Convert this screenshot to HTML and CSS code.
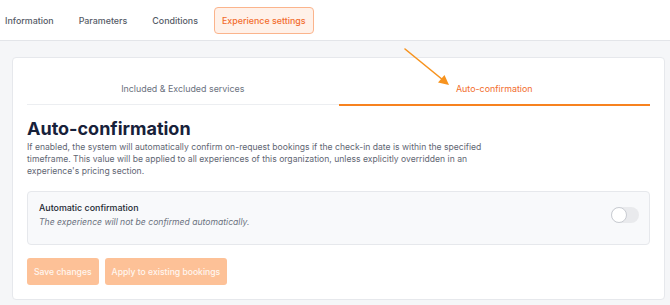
FILE: index.html
```html
<!DOCTYPE html>
<html lang="en">
<head>
    <meta charset="UTF-8">
    <meta name="viewport" content="width=device-width, initial-scale=1.0">
    <title>Experience settings</title>
    <link rel="stylesheet" href="styles.css">
</head>
<body>
    <nav class="topnav">
        <a class="nav-link">Information</a>
        <a class="nav-link">Parameters</a>
        <a class="nav-link">Conditions</a>
        <a class="nav-link active">Experience settings</a>
    </nav>

    <main class="page">
        <div class="card">
            <div class="tabs">
                <div class="tab">Included &amp; Excluded services</div>
                <div class="tab active">Auto-confirmation</div>
            </div>

            <h1>Auto-confirmation</h1>
            <p class="description">If enabled, the system will automatically confirm on-request bookings if the check-in date is within the specified timeframe. This value will be applied to all experiences of this organization, unless explicitly overridden in an experience's pricing section.</p>

            <div class="setting">
                <div class="setting-text">
                    <div class="setting-title">Automatic confirmation</div>
                    <div class="setting-hint">The experience will not be confirmed automatically.</div>
                </div>
                <div class="toggle"><span class="knob"></span></div>
            </div>

            <div class="actions">
                <button type="button" disabled>Save changes</button>
                <button type="button" disabled>Apply to existing bookings</button>
            </div>
        </div>

        <!-- annotation arrow pointing at the active tab -->
        <svg class="arrow" width="50" height="42" viewBox="0 0 50 42">
            <line x1="2" y1="2" x2="40" y2="33" stroke="#f7931e" stroke-width="1.6" stroke-linecap="round"/>
            <polygon points="46,38 35,35.5 41.5,28" fill="#f7931e"/>
        </svg>
    </main>
</body>
</html>
```

FILE: styles.css
```css
body {
    font-family: Inter, "Noto Sans", sans-serif;
    margin: 0;
    padding: 0;
    background-color: #f5f6f8;
    color: #1f2937;
    height: 305px;
    overflow: hidden;
}
.topnav {
    height: 40px;
    background: white;
    border-bottom: 1px solid #e3e5e9;
    display: flex;
    align-items: center;
    padding-left: 5px;
    gap: 25px;
}
.nav-link {
    font-size: 8.9px;
    font-weight: 500;
    color: #555b66;
}
.nav-link.active {
    color: #f26d2d;
    background: #fff1e9;
    border: 1px solid #fbb48c;
    border-radius: 4px;
    padding: 7px 7px;
    margin-left: -9px;
}
.page {
    position: relative;
    padding: 16px 5px 0 12px;
}
.card {
    background: white;
    border: 1px solid #e6e8ec;
    border-radius: 4px;
    padding: 0 14px 14px 14px;
}
.tabs {
    display: flex;
}
.tab {
    flex: 1;
    text-align: center;
    font-size: 8.9px;
    color: #6b7280;
    padding: 25px 0 10px 0;
    border-bottom: 1px solid #eceef1;
    margin-bottom: 1px;
}
.tab.active {
    color: #f26d2d;
    border-bottom: 2px solid #f7821f;
    margin-bottom: 0;
}
h1 {
    font-size: 18px;
    font-weight: 700;
    color: #17213a;
    margin: 12px 0 1px 0;
    line-height: 22px;
}
.description {
    font-size: 8.6px;
    line-height: 12px;
    color: #5f6673;
    max-width: 456px;
    margin: 0 0 14px 0;
}
.setting {
    background: #f8f9fb;
    border: 1px solid #e6e8ec;
    border-radius: 4px;
    height: 45px;
    padding: 0 10px 7px 11px;
    display: flex;
    align-items: center;
    justify-content: space-between;
}
.setting-title {
    font-size: 8.9px;
    font-weight: 500;
    color: #222731;
    margin-bottom: 4px;
}
.setting-hint {
    font-size: 8.6px;
    font-style: italic;
    color: #6b7280;
}
.toggle {
    width: 28px;
    height: 16px;
    border-radius: 8px;
    background: #e9eaed;
    position: relative;
}
.knob {
    position: absolute;
    left: 0;
    top: 0;
    width: 14px;
    height: 14px;
    border-radius: 50%;
    background: white;
    border: 1px solid #c9ccd2;
}
.actions {
    display: flex;
    gap: 6px;
    margin-top: 13px;
}
button {
    font-family: Inter, "Noto Sans", sans-serif;
    font-size: 8.6px;
    font-weight: 500;
    background-color: #fdc197;
    color: #fff6ef;
    border: none;
    height: 27px;
    padding: 0 7px;
    border-radius: 3px;
}
.arrow {
    position: absolute;
    left: 403px;
    top: 6px;
}
```
